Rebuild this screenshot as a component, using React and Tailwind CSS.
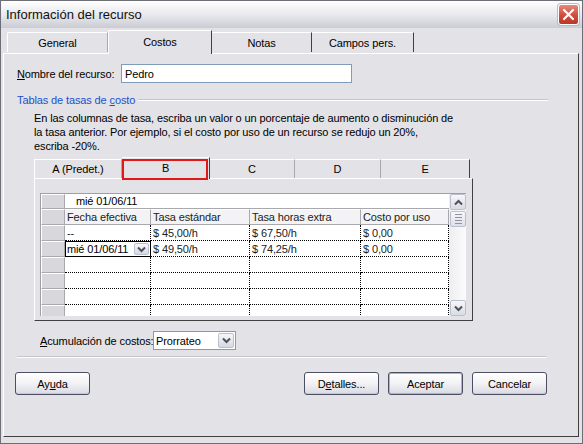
import React from "react";

const Chevron = ({ up = false, color = "#4D5057" }) => (
  <svg width="9" height="7" viewBox="0 0 9 7">
    <path
      d={up ? "M1 5.5 L4.5 2 L8 5.5" : "M1 1.5 L4.5 5 L8 1.5"}
      fill="none"
      stroke={color}
      strokeWidth="2"
    />
  </svg>
);

const ScrollBtn = ({ up }) => (
  <div className="w-[16px] h-[16px] rounded-[2px] border border-[#BAC0CE] bg-gradient-to-b from-[#F6F7FA] to-[#D9DCE5] flex items-center justify-center">
    <Chevron up={up} />
  </div>
);

const RowHead = ({ h = "h-[16px]" }) => (
  <div className={`w-[24px] ${h} shrink-0 bg-[#D8D7DC] border-t border-l border-white border-b border-r border-b-[#A9A8AD] border-r-[#A9A8AD]`} />
);

const cols = [86, 99, 111, 88];

const dataRows = [
  ["--", "$ 45,00/h", "$ 67,50/h", "$ 0,00"],
  ["EDIT", "$ 49,50/h", "$ 74,25/h", "$ 0,00"],
  ["", "", "", ""],
  ["", "", "", ""],
  ["", "", "", ""],
  ["", "", "", ""],
];

const Btn = ({ children, def = false }) => (
  <div
    className={`w-[75px] h-[23px] rounded-[3px] border border-[#4C4F63] flex items-center justify-center bg-gradient-to-b from-[#FFFFFF] via-[#F2F2F5] to-[#D9D9E2] ${
      def ? "shadow-[inset_0_0_0_1px_#9FB4DE]" : "shadow-[inset_0_-1px_0_#C8C8D2]"
    }`}
  >
    {children}
  </div>
);

export default function App() {
  return (
    <div className="w-[583px] h-[444px] overflow-hidden bg-[#E3E2E7] border border-[#6E6E78] flex flex-col font-['Liberation_Sans',Arial,sans-serif] text-[11px] tracking-[-0.12px] text-black leading-[14px] whitespace-nowrap">
      {/* Title bar */}
      <div className="h-[27px] shrink-0 flex items-center justify-between pl-[5px] pr-[3px] bg-gradient-to-b from-[#FFFFFF] via-[#E9E9EE] to-[#CBCBD4]">
        <span className="text-[13px] tracking-[0px] leading-[16px] text-[#111]">Información del recurso</span>
        <div className="w-[21px] h-[21px] rounded-[3px] border border-white bg-gradient-to-b from-[#E58A7E] via-[#D1503F] to-[#B83726] flex items-center justify-center shadow-[0_0_0_1px_#B9B9C2]">
          <svg width="13" height="13" viewBox="0 0 13 13">
            <path d="M2 2 L11 11 M11 2 L2 11" stroke="white" strokeWidth="2.2" strokeLinecap="round" />
          </svg>
        </div>
      </div>

      {/* Tabs */}
      <div className="h-[25px] shrink-0 flex items-end pl-[6px] relative z-10">
        <div className="w-[101px] h-[20px] mb-[1px] border-t border-l border-white border-r border-r-[#A9A8AD] rounded-tl-[2px] flex items-center justify-center">
          General
        </div>
        <div className="w-[104px] h-[24px] -mb-px bg-[#E3E2E7] border-t border-l border-white border-r border-r-[#404040] rounded-tl-[2px] flex items-start pt-[4px] justify-center">
          Costos
        </div>
        <div className="w-[100px] h-[20px] mb-[1px] border-t border-white border-r border-r-[#404040] flex items-center justify-center">
          Notas
        </div>
        <div className="w-[102px] h-[20px] mb-[1px] border-t border-white border-r border-r-[#404040] flex items-center justify-center">
          Campos pers.
        </div>
      </div>

      {/* Panel */}
      <div className="flex-1 ml-[2px] mr-[3px] mb-[6px] border-t border-l border-white border-r border-b border-r-[#404040] border-b-[#404040] flex flex-col pl-[13px]">
        {/* Name row */}
        <div className="flex items-center mt-[10px] h-[19px]">
          <span className="w-[104px]">
            <u>N</u>ombre del recurso:
          </span>
          <div className="w-[231px] h-[19px] bg-white border border-[#7F9DB9] flex items-center pl-[3px]">
            Pedro
          </div>
        </div>

        {/* Group title */}
        <div className="flex items-center mt-[10px] h-[14px] pr-[30px]">
          <span className="text-[#2050D0] whitespace-nowrap">
            Tablas de tasas de <u>c</u>osto
          </span>
          <div className="flex-1 ml-[3px] h-[2px] border-t border-[#C5C4CA] border-b border-b-white" />
        </div>

        {/* Paragraph */}
        <div className="ml-[17px] mt-[4px] leading-[14px]">
          <div>En las columnas de tasa, escriba un valor o un porcentaje de aumento o disminución de</div>
          <div>la tasa anterior. Por ejemplo, si el costo por uso de un recurso se redujo un 20%,</div>
          <div>escriba -20%.</div>
        </div>

        {/* Inner tabs */}
        <div className="ml-[17px] mt-[4px] w-[439px] flex flex-col">
          <div className="h-[21px] flex items-end relative z-10">
            <div className="w-[88px] h-[19px] border-t border-l border-white border-r border-r-[#A9A8AD] flex items-center justify-center">
              A (Predet.)
            </div>
            <div className="w-[88px] h-[22px] -mb-px bg-[#E3E2E7] border-t border-white border-r border-r-[#404040] flex items-start pt-[3px] justify-center relative">
              B
              <div className="absolute left-[0px] top-[1px] w-[86px] h-[21px] border-2 border-[#E01818]" />
            </div>
            <div className="w-[85px] h-[19px] border-t border-white border-r border-r-[#A9A8AD] flex items-center justify-center">
              C
            </div>
            <div className="w-[86px] h-[19px] border-t border-white border-r border-r-[#A9A8AD] flex items-center justify-center">
              D
            </div>
            <div className="w-[89px] h-[19px] border-t border-white border-r border-r-[#404040] flex items-center justify-center">
              E
            </div>
          </div>
          <div className="h-[143px] border-t border-l border-white border-r border-b border-r-[#404040] border-b-[#404040] pl-[5px] pt-[14px]">
            {/* Grid */}
            <div className="flex w-[426px] h-[123px] border-t border-l border-[#A0A0A4]">
              <div className="w-[408px] h-[122px] overflow-hidden bg-white flex flex-col">
                {/* edit bar */}
                <div className="flex h-[15px] shrink-0">
                  <RowHead h="h-[15px]" />
                  <div className="flex-1 flex items-center pl-[11px] border-b border-[#A9A8AD]">mié 01/06/11</div>
                </div>
                {/* header */}
                <div className="flex h-[16px] shrink-0">
                  <RowHead />
                  {["Fecha efectiva", "Tasa estándar", "Tasa horas extra", "Costo por uso"].map((t, i) => (
                    <div
                      key={t}
                      style={{ width: cols[i] }}
                      className="h-[16px] shrink-0 bg-[#F3F3F5] border-r border-b border-[#A9A8AD] border-t border-t-white flex items-center pl-[2px] text-[#222]"
                    >
                      {t}
                    </div>
                  ))}
                </div>
                {dataRows.map((r, ri) => (
                  <div key={ri} className="flex h-[16px] shrink-0">
                    <RowHead />
                    {r.map((c, ci) =>
                      c === "EDIT" ? (
                        <div
                          key={ci}
                          style={{ width: cols[ci] }}
                          className="h-[16px] shrink-0 border border-black flex items-center justify-between pl-[1px] pr-[1px]"
                        >
                          <span>mié 01/06/11</span>
                          <div className="w-[15px] h-[12px] rounded-[2px] border border-[#BAC0CE] bg-gradient-to-b from-[#F6F7FA] to-[#D5D9E3] flex items-center justify-center">
                            <Chevron />
                          </div>
                        </div>
                      ) : (
                        <div
                          key={ci}
                          style={{ width: cols[ci] }}
                          className="h-[16px] shrink-0 border-r border-b border-dotted border-black flex items-center pl-[2px] text-[#222]"
                        >
                          {c}
                        </div>
                      )
                    )}
                  </div>
                ))}
              </div>
              {/* scrollbar */}
              <div className="w-[17px] h-[122px] bg-gradient-to-r from-[#EEEEF2] to-[#FBFBFC] flex flex-col justify-between pl-[1px]">
                <div className="flex flex-col gap-[1px]">
                  <ScrollBtn up />
                  <div className="w-[16px] h-[16px] rounded-[2px] border border-[#BAC0CE] bg-gradient-to-b from-[#F6F7FA] to-[#DDE0E8] flex flex-col items-center justify-center gap-[2px]">
                    <div className="w-[7px] h-[1px] bg-[#8E93A3]" />
                    <div className="w-[7px] h-[1px] bg-[#8E93A3]" />
                    <div className="w-[7px] h-[1px] bg-[#8E93A3]" />
                    <div className="w-[7px] h-[1px] bg-[#8E93A3]" />
                  </div>
                </div>
                <ScrollBtn />
              </div>
            </div>
          </div>
        </div>

        {/* Acumulación */}
        <div className="flex items-center ml-[23px] mt-[10px] h-[19px]">
          <span className="w-[113px] whitespace-nowrap">
            <u>A</u>cumulación de costos:
          </span>
          <div className="w-[83px] h-[19px] bg-white border border-[#7F9DB9] flex items-center justify-between pl-[2px] pr-[1px]">
            <span>Prorrateo</span>
            <div className="w-[16px] h-[15px] rounded-[2px] border border-[#BAC0CE] bg-gradient-to-b from-[#F6F7FA] to-[#D5D9E3] flex items-center justify-center">
              <Chevron />
            </div>
          </div>
        </div>

        {/* Separator */}
        <div className="mt-[6px] w-[529px] h-[2px] border-t border-[#C5C4CA] border-b border-b-white" />

        {/* Buttons */}
        <div className="flex mt-[14px] w-[529px] -ml-[2px]">
          <Btn>
            <span>
              Ay<u>u</u>da
            </span>
          </Btn>
          <div className="flex-1" />
          <div className="flex gap-[9px] mr-[-3px]">
            <Btn>
              <span>
                D<u>e</u>talles...
              </span>
            </Btn>
            <Btn def>Aceptar</Btn>
            <Btn>Cancelar</Btn>
          </div>
        </div>
      </div>
    </div>
  );
}
